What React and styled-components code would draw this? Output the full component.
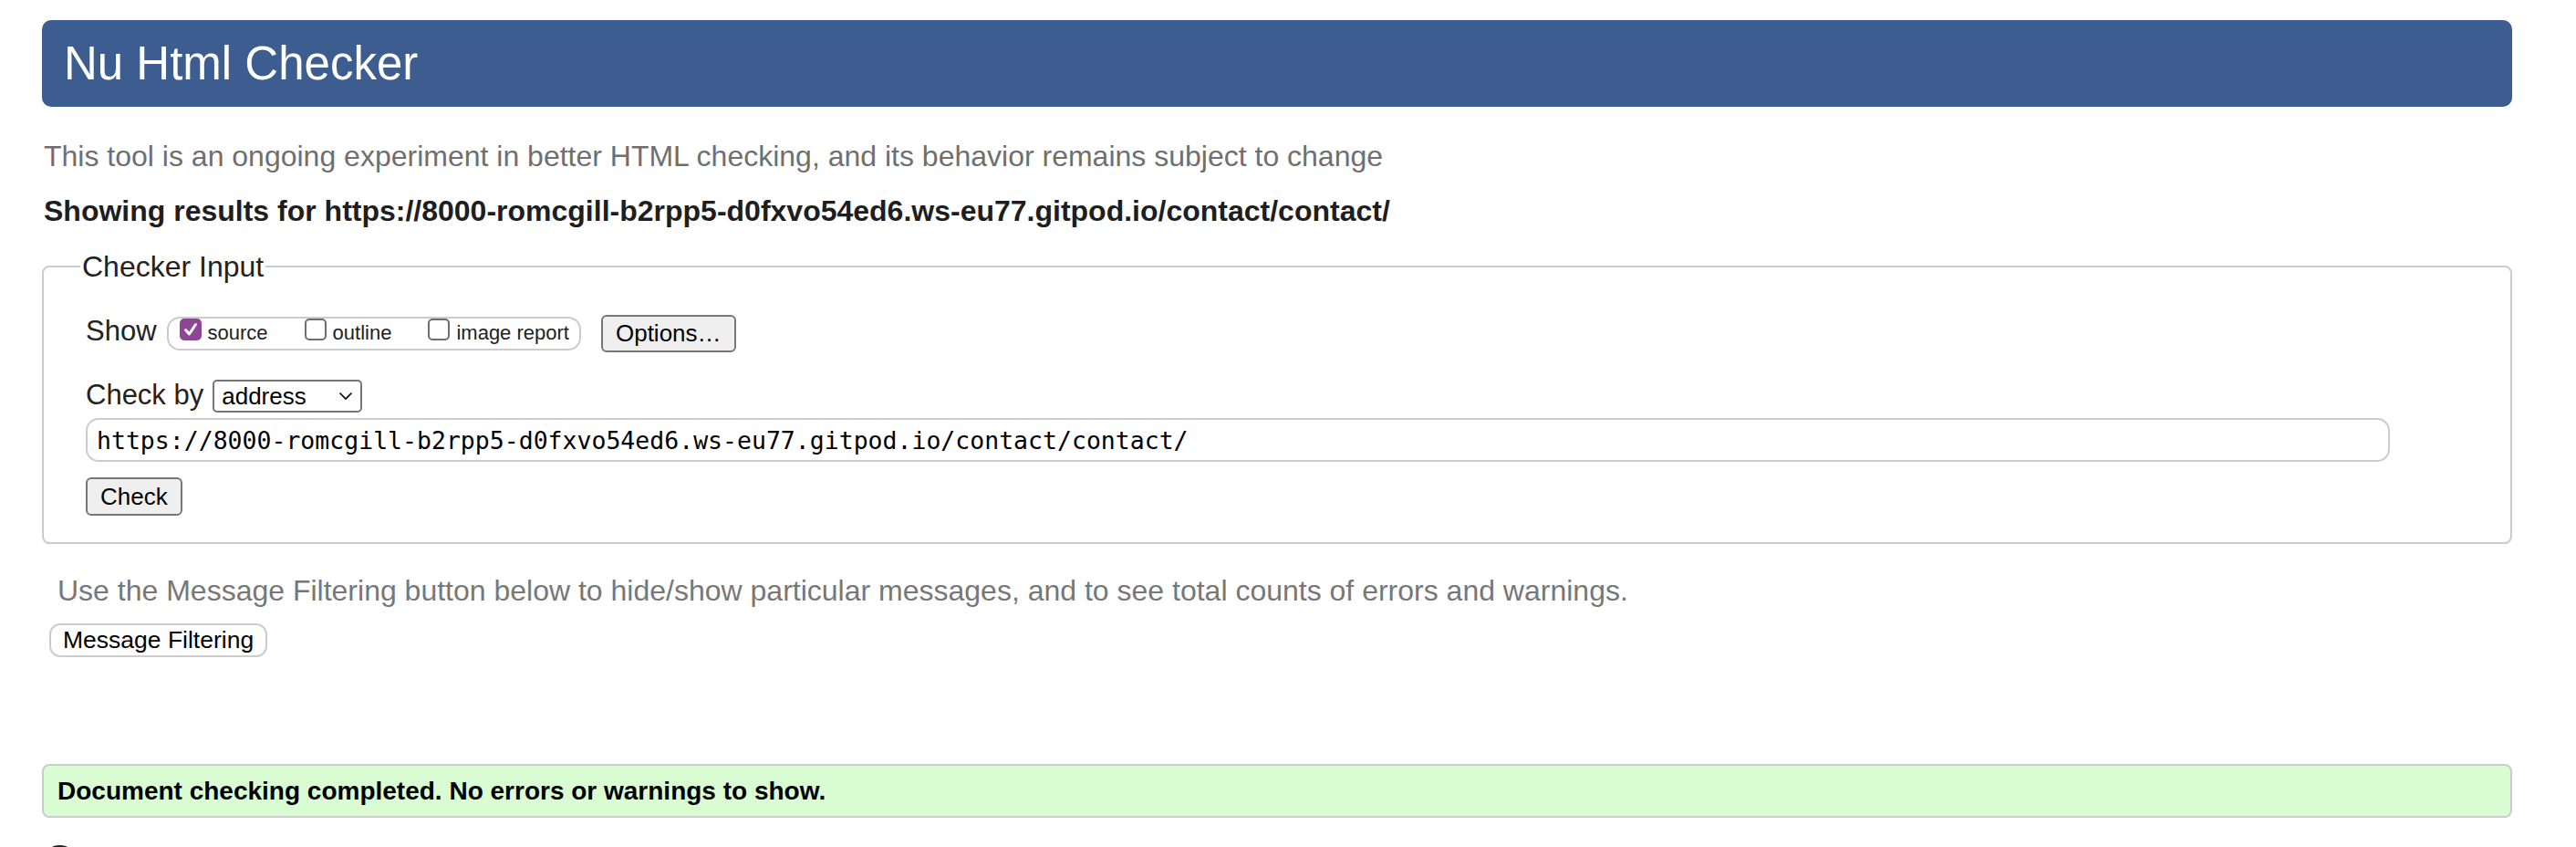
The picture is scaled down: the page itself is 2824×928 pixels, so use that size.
import React from "react";
import styled, { createGlobalStyle } from "styled-components";

const GlobalStyle = createGlobalStyle`
  body {
    margin: 0;
    background: #fff;
    font-family: "Liberation Sans", Arial, Helvetica, sans-serif;
    color: #222;
  }
`;

const Page = styled.div`
  width: 2708px;
  padding: 22px 0 0 46px;
`;

const Banner = styled.h1`
  margin: 0;
  height: 95px;
  line-height: 95px;
  padding-left: 24px;
  border-radius: 10px;
  background: #3d5d90;
  color: #fff;
  font-size: 51px;
  font-weight: normal;
`;

const Intro = styled.p`
  margin: 34px 0 0 2px;
  font-size: 32px;
  line-height: 40px;
  color: #6f6f6f;
`;

const ResultsFor = styled.p`
  margin: 22px 0 0 2px;
  font-size: 32px;
  line-height: 36px;
  font-weight: bold;
  color: #1e1e1e;
`;

const Fieldset = styled.fieldset`
  margin: 25px 0 0;
  padding: 35px 20px 29px 40px;
  border: 2px solid #ccc;
  border-radius: 8px;
  min-width: 0;
`;

const Legend = styled.legend`
  padding: 0 2px;
  font-size: 32px;
  line-height: 36px;
  color: #222;
`;

const Row = styled.div`
  display: flex;
  align-items: center;
  margin: ${(p) => p.$mt || 0}px 0 0 6px;
`;

const RowLabel = styled.span`
  font-size: 31px;
  line-height: 30px;
  padding-bottom: ${(p) => p.$lift || 0}px;
  margin-right: ${(p) => p.$gap || 10}px;
  color: #222;
`;

const Segment = styled.div`
  display: flex;
  align-items: center;
  gap: 40px;
  box-sizing: border-box;
  height: 37px;
  padding: 0 11px 7px 12px;
  border: 2px solid #ccc;
  border-radius: 14px;
`;

const Option = styled.label`
  display: flex;
  align-items: flex-end;
  gap: 7px;
  font-size: 22px;
  line-height: 22px;
  color: #222;
`;

const Box = styled.span`
  display: flex;
  align-items: center;
  justify-content: center;
  box-sizing: border-box;
  width: 24px;
  height: 24px;
  margin-bottom: 3px;
  border-radius: 5px;
  border: ${(p) => (p.$checked ? "none" : "2px solid #6e6e6e")};
  background: ${(p) => (p.$checked ? "#8e4595" : "#fff")};
`;

const Button = styled.button`
  box-sizing: border-box;
  height: ${(p) => p.$h || 42}px;
  margin-left: ${(p) => p.$ml || 0}px;
  padding: 0 14px;
  border: 2px solid #767676;
  border-radius: 6px;
  background: #efefef;
  font-family: "Liberation Sans", Arial, sans-serif;
  font-size: 26px;
  color: #000;
`;

const Select = styled.div`
  display: flex;
  align-items: center;
  justify-content: space-between;
  box-sizing: border-box;
  width: 164px;
  height: 36px;
  padding: 0 8px 0 8px;
  border: 2px solid #767676;
  border-radius: 5px;
  font-size: 26px;
  color: #000;
`;

const UrlInput = styled.input`
  display: block;
  box-sizing: border-box;
  width: 2526px;
  height: 48px;
  margin: 6px 0 0 6px;
  padding: 0 10px;
  border: 2px solid #ccc;
  border-radius: 14px;
  font-family: "DejaVu Sans Mono", "Liberation Mono", monospace;
  font-size: 26.5px;
  color: #000;
  outline: none;
`;

const CheckWrap = styled.div`
  margin: 17px 0 0 6px;
`;

const Hint = styled.p`
  margin: 31px 0 0 17px;
  font-size: 32px;
  line-height: 40px;
  color: #777;
`;

const FilterButton = styled.button`
  display: block;
  box-sizing: border-box;
  height: 37px;
  margin: 16px 0 0 8px;
  padding: 0 13px;
  border: 2px solid #ccc;
  border-radius: 12px;
  background: #fff;
  font-family: "Liberation Sans", Arial, sans-serif;
  font-size: 26.5px;
  color: #000;
`;

const Success = styled.div`
  margin-top: 117px;
  box-sizing: border-box;
  height: 59px;
  padding: 0 15px;
  border: 2px solid #ccc;
  border-radius: 8px;
  background: #d9fcd3;
  font-size: 28px;
  line-height: 55px;
  font-weight: bold;
  color: #000;
`;

const SourceHeading = styled.h2`
  margin: 21px 0 0 6px;
  font-size: 40px;
  line-height: 46px;
  font-weight: bold;
  color: #222;
`;

const url =
  "https://8000-romcgill-b2rpp5-d0fxvo54ed6.ws-eu77.gitpod.io/contact/contact/";

function CheckBox({ checked }) {
  return (
    <Box $checked={checked}>
      {checked && (
        <svg width="18" height="18" viewBox="0 0 18 18">
          <path
            d="M3.5 9.5 L7.5 14 L14.5 3.5"
            fill="none"
            stroke="#fff"
            strokeWidth="3"
            strokeLinecap="round"
            strokeLinejoin="round"
          />
        </svg>
      )}
    </Box>
  );
}

export default function App() {
  const options = [
    { name: "source", checked: true },
    { name: "outline", checked: false },
    { name: "image report", checked: false },
  ];

  return (
    <>
      <GlobalStyle />
      <Page>
        <Banner>Nu Html Checker</Banner>
        <Intro>
          This tool is an ongoing experiment in better HTML checking, and its
          behavior remains subject to change
        </Intro>
        <ResultsFor>Showing results for {url}</ResultsFor>

        <Fieldset>
          <Legend>Checker Input</Legend>
          <Row>
            <RowLabel $lift={6} $gap={11}>
              Show
            </RowLabel>
            <Segment>
              {options.map((o) => (
                <Option key={o.name}>
                  <CheckBox checked={o.checked} />
                  {o.name}
                </Option>
              ))}
            </Segment>
            <Button $h={41} $ml={22}>
              Options…
            </Button>
          </Row>
          <Row $mt={30}>
            <RowLabel $lift={3} $gap={10}>
              Check by
            </RowLabel>
            <Select>
              <span>address</span>
              <svg width="16" height="10" viewBox="0 0 16 10">
                <path
                  d="M1.5 1.5 L8 8 L14.5 1.5"
                  fill="none"
                  stroke="#000"
                  strokeWidth="1.6"
                />
              </svg>
            </Select>
          </Row>
          <UrlInput type="url" defaultValue={url} readOnly />
          <CheckWrap>
            <Button $h={42}>Check</Button>
          </CheckWrap>
        </Fieldset>

        <Hint>
          Use the Message Filtering button below to hide/show particular
          messages, and to see total counts of errors and warnings.
        </Hint>
        <FilterButton>Message Filtering</FilterButton>

        <Success>
          Document checking completed. No errors or warnings to show.
        </Success>
        <SourceHeading>Source</SourceHeading>
      </Page>
    </>
  );
}
